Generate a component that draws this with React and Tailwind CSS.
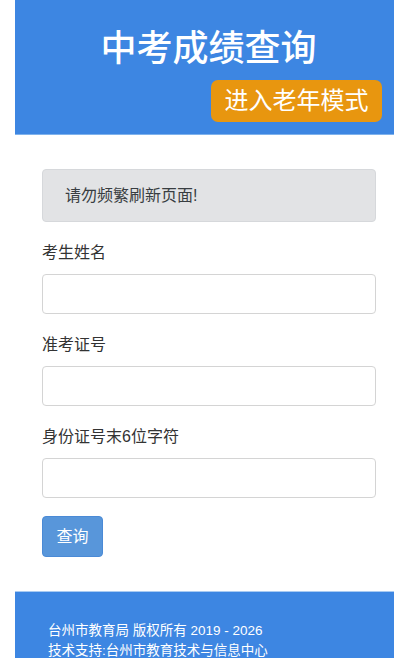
import React from "react";

const font = { fontFamily: '"Liberation Sans", "Noto Sans CJK SC", sans-serif' };

const Field = ({ label }) => (
    <div className="mt-[20px]">
        <label className="block text-[16px] leading-[22px] text-[#333]">{label}</label>
        <input
            type="text"
            className="mt-[10px] block h-[40px] w-full rounded-[4px] border border-[#d4d4d4] bg-white px-3 outline-none"
        />
    </div>
);

export default function App() {
    return (
        <div className="min-h-[658px] bg-white pl-[15px] pr-[14px]" style={font}>
            {/* 页头 */}
            <header className="relative h-[135px] border-b border-[#7fb2ec] bg-[#3d86e2]">
                <h1 className="pl-[8px] pt-[25px] text-center text-[36px] leading-[48px] font-medium text-white">
                    中考成绩查询
                </h1>
                <button className="absolute right-[12px] top-[80px] h-[42px] w-[171px] rounded-[7px] bg-[#e8960f] text-[24px] leading-[42px] text-white">
                    进入老年模式
                </button>
            </header>

            <main className="pb-[34px] pl-[27px] pr-[18px] pt-[34px]">
                <div className="flex h-[53px] items-center rounded-[4px] border border-[#d6d8db] bg-[#e2e3e5] pl-[22px] text-[16px] text-[#383d41]">
                    请勿频繁刷新页面!
                </div>

                <Field label="考生姓名" />
                <Field label="准考证号" />
                <Field label="身份证号末6位字符" />

                <button className="mt-[18px] h-[41px] w-[61px] rounded-[4px] border border-[#4a8ad6] bg-[#5896da] text-[16px] text-white">
                    查询
                </button>
            </main>

            {/* 页脚 */}
            <footer className="border-t border-[#a9cbf2] bg-[#3d86e2] pb-[20px] pl-[33px] pt-[29px] text-[13.5px] leading-[19.5px] text-white">
                <p>台州市教育局 版权所有 2019 - 2026</p>
                <p>技术支持:台州市教育技术与信息中心</p>
            </footer>
        </div>
    );
}
